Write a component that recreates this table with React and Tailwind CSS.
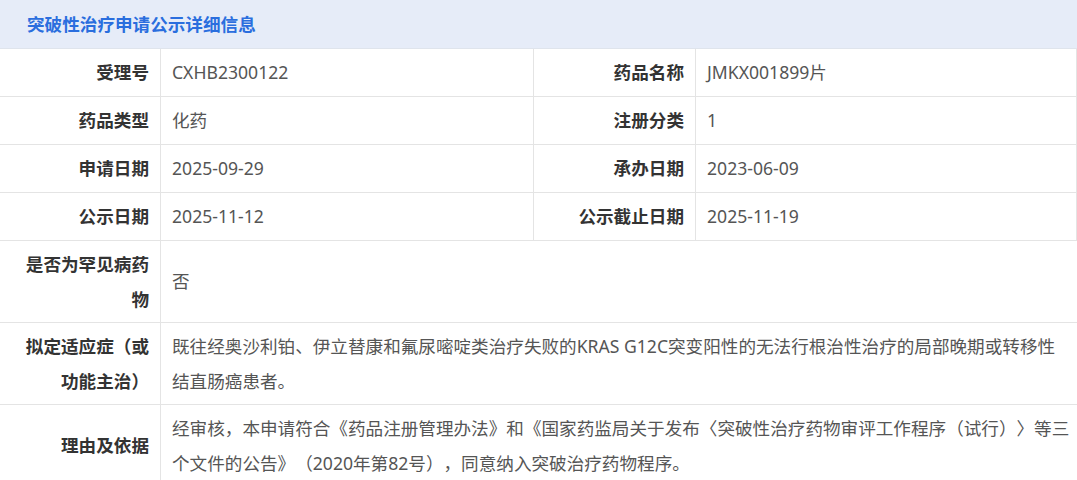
const rows = [
  [['受理号', 'CXHB2300122'], ['药品名称', 'JMKX001899片']],
  [['药品类型', '化药'], ['注册分类', '1']],
  [['申请日期', '2025-09-29'], ['承办日期', '2023-06-09']],
  [['公示日期', '2025-11-12'], ['公示截止日期', '2025-11-19']],
];

const wide = [
  ['是否为罕见病药物', '否'],
  ['拟定适应症（或功能主治）', '既往经奥沙利铂、伊立替康和氟尿嘧啶类治疗失败的KRAS G12C突变阳性的无法行根治性治疗的局部晚期或转移性结直肠癌患者。'],
  ['理由及依据', '经审核，本申请符合《药品注册管理办法》和《国家药监局关于发布〈突破性治疗药物审评工作程序（试行）〉等三个文件的公告》（2020年第82号），同意纳入突破治疗药物程序。'],
];

function Label({ children }) {
  return (
    <div className="flex min-h-[48px] items-center justify-end border-b border-r border-[#e4e4e4] py-[5.5px] pl-6 pr-[11px] text-right font-bold leading-[35px] text-[#333]">
      {children}
    </div>
  );
}

function Value({ children, wide }) {
  return (
    <div
      className={`flex min-h-[48px] items-center border-b border-[#e4e4e4] py-[5.5px] pl-[11px] pr-[6px] leading-[35px] text-[#555] ${
        wide ? 'col-span-3' : 'border-r'
      }`}
    >
      {children}
    </div>
  );
}

export default function App() {
  return (
    <div
      className="w-[1077px] bg-white text-[17.6px] [text-spacing-trim:space-all]"
      style={{ fontFamily: '"Noto Sans", "Noto Sans CJK SC", sans-serif' }}
    >
      {/* Header */}
      <div className="flex h-[49px] items-center border-b border-[#dfe4ec] bg-[#e6ecf8] pl-[27px]">
        <span className="font-bold text-[#2a6ede]">突破性治疗申请公示详细信息</span>
      </div>

      {/* Detail table */}
      <div className="grid grid-cols-[161px_373px_162px_1fr]">
        {rows.map((row, i) =>
          row.map(([label, value], j) => (
            <div key={`${i}-${j}`} className="contents">
              <Label>{label}</Label>
              <Value>{value}</Value>
            </div>
          ))
        )}
        {wide.map(([label, value]) => (
          <div key={label} className="contents">
            <Label>{label}</Label>
            <Value wide>{value}</Value>
          </div>
        ))}
      </div>
    </div>
  );
}
